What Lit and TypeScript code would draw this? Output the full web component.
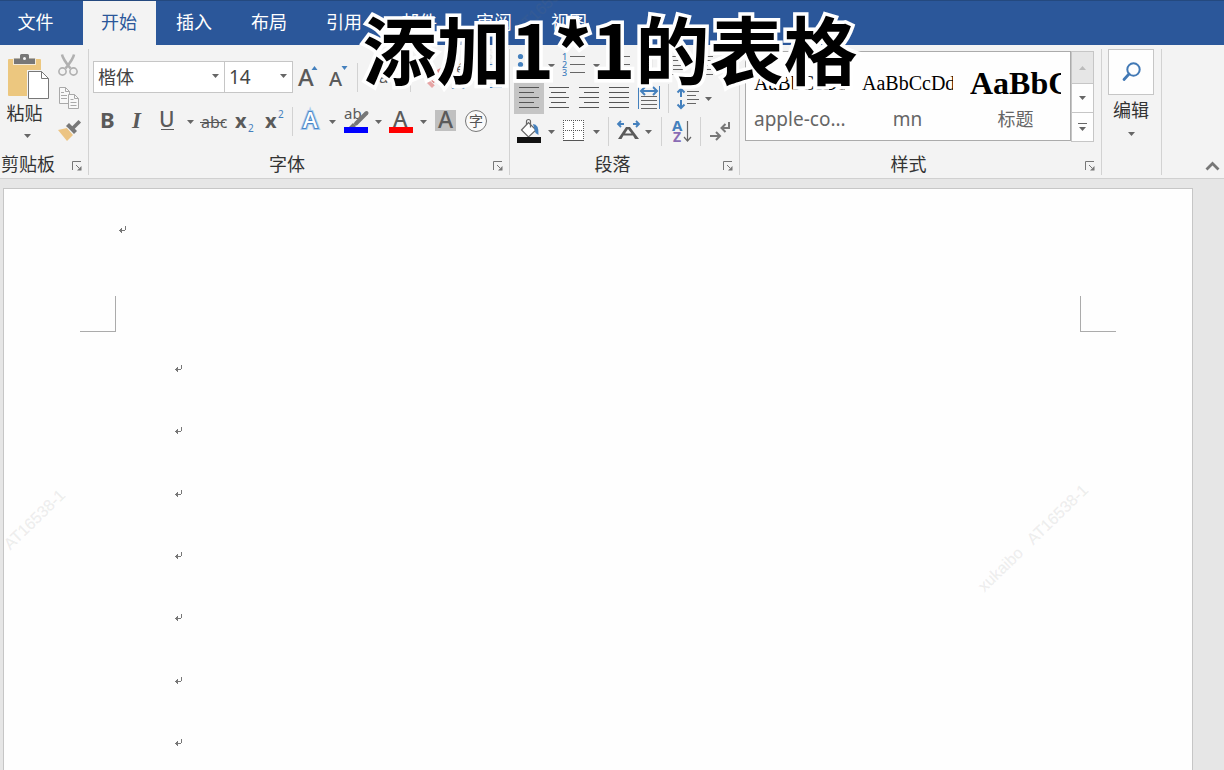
import { LitElement, html, svg, css } from "lit";
import type { SVGTemplateResult, TemplateResult } from "lit";
import { customElement, state } from "lit/decorators.js";
import { classMap } from "lit/directives/class-map.js";

type Art = SVGTemplateResult | SVGTemplateResult[];

/* All ribbon glyphs share one drawing sheet; every tool shows its own window of it. */
const sheet = (x: number, y: number, w: number, h: number, art: Art) => html`
  <svg width=${w} height=${h} viewBox="${x} ${y} ${w} ${h}" aria-hidden="true">${art}</svg>
`;

const tri = (cx: number, y: number, fill = "#666") =>
  svg`<path d="M${cx - 3.5} ${y}h7l-3.5 4z" fill=${fill}/>`;

const lines = (rows: number[][], color = "#666") =>
  rows.map(([x1, x2, y]) => svg`<rect x=${x1} y=${y} width=${x2 - x1} height="1" fill=${color}/>`);

const BLUE = "#4480bd";
const DARK = "#5a5a5a";

const pasteArt = svg`
  <rect x="8" y="59" width="33" height="37" rx="1" fill="#ecc77f"/>
  <path d="M13 58h23v7H13z" fill="#f3ead8"/>
  <path d="M14 58.500h6v-3q0-1.500 1.500-1.500h6q1.500 0 1.500 1.500v3h6V64H14z" fill="#777"/>
  <circle cx="24.500" cy="58.500" r="1.500" fill="#f3f3f3"/>
  <path d="M27 70h15l8 8v22H27z" fill="#f3f3f3"/>
  <path d="M28.500 71.500h13l7 7v20h-20z" fill="#fff" stroke="#777"/>
  <path d="M41.500 71.500v7h7" fill="none" stroke="#777"/>`;

const cutArt = svg`
  <path d="M62 54.500q.5 4 8.500 14M74 54.500q-.5 4-8.500 14" fill="none" stroke="#b0b0b0" stroke-width="2.500"/>
  <circle cx="62.500" cy="71.500" r="3.600" fill="none" stroke="#b0b0b0" stroke-width="1.600"/>
  <circle cx="73.500" cy="71.500" r="3.600" fill="none" stroke="#b0b0b0" stroke-width="1.600"/>`;

const copyArt = svg`
  <path d="M59.500 87.500h6l4 4v12h-10z" fill="#f8f8f8" stroke="#a9a9a9"/>
  <path d="M65.500 87.500v4h4M61 92.500h3M61 95.500h6M61 98.500h6" fill="none" stroke="#a9a9a9"/>
  <path d="M68.500 94.500h6l4 4v10h-10z" fill="#f8f8f8" stroke="#a9a9a9"/>
  <path d="M74.500 94.500v4h4M70.500 99.500h3M70.500 102.500h6M70.500 105.500h6" fill="none" stroke="#a9a9a9"/>`;

const brushArt = svg`
  <path d="M58 130l9-2 6 7-6 6z" fill="#ecc483"/>
  <path d="M66 126l3-3 8 8-3 3z" fill="#777"/>
  <path d="M73 128l5.500-5.500" stroke="#777" stroke-width="3.600" stroke-linecap="square"/>
  <path d="M67 127.500l6.500 7" stroke="#f3f3f3" stroke-width="1"/>`;

const searchArt = svg`
  <circle cx="1133.500" cy="69.500" r="6.200" fill="none" stroke="#4279b5" stroke-width="2"/>
  <path d="M1129 74l-5 5.500" stroke="#4279b5" stroke-width="2.800" stroke-linecap="round"/>`;

const wordText = (x: number, y: number, size: number, t: string, extra = "t") =>
  svg`<text class=${extra} x=${x} y=${y} font-size=${size}>${t}</text>`;

const growArt = svg`${wordText(298, 86, 24, "A", "t semi")}<path d="M311.500 70h6l-3-4z" fill=${BLUE}/>`;
const shrinkArt = svg`${wordText(329, 86, 20, "A", "t semi")}<path d="M341.500 66h6l-3 4z" fill=${BLUE}/>`;
const caseArt = svg`${wordText(367, 83, 18, "Aa")}${tri(400, 75)}`;
const eraserArt = svg`
  <path d="M427 81l10-11 7-4-3 9-8 9z" fill="#dd8a8a"/><path d="M426 82l3-3 6 6-3 3z" fill="#e7a5a5"/>
  <path d="M428.500 79l6.500 6" stroke="#f3f3f3" stroke-width="1"/>`;
const phoneticArt = svg`
  ${wordText(446, 73, 13, "wén")}
  <text class="cjk" x="451" y="87" font-size="14" fill=${BLUE}>文</text>`;
const frameArt = svg`
  <rect x="478.500" y="64.500" width="23" height="23" fill="none" stroke="#4480bd"/>
  ${wordText(483, 84, 19, "A")}`;

const boldArt = wordText(100, 128, 22, "B", "t bold");
const italicArt = svg`<text class="serif" x="132" y="128" font-size="23" fill=${DARK}>I</text>`;
const underArt = svg`${wordText(159, 127, 21, "U", "t semi")}<rect x="161" y="129" width="13" height="1" fill=${DARK}/>`;
const strikeArt = svg`${wordText(201, 128, 16, "abc")}<rect x="200" y="122" width="25" height="1" fill="#555"/>`;
const subArt = svg`${wordText(235, 128, 20, "x", "t bold")}<text class="sans" x="248" y="132" font-size="10" fill=${BLUE}>2</text>`;
const supArt = svg`${wordText(265, 128, 20, "x", "t bold")}<text class="sans" x="278" y="118" font-size="10" fill=${BLUE}>2</text>`;
const effectArt = svg`
  <text class="sans semi" x="303" y="128" font-size="22" fill="#fff" stroke="#a9cbee" stroke-width="4" paint-order="stroke">A</text>
  <text class="sans semi" x="303" y="128" font-size="22" fill="#fff" stroke="#4a86c6" stroke-width="2" paint-order="stroke">A</text>`;
const markerArt = svg`
  ${wordText(344, 119, 15, "ab")}
  <path d="M349 127l4-4 3 3-1 1z" fill="#777"/><path d="M356 123.500l10.500-10.500" stroke="#777" stroke-width="4" stroke-linecap="round"/>
  <rect x="344" y="127" width="24" height="6" fill="#00f"/>`;
const colorArt = svg`${wordText(393, 127, 22, "A", "t semi")}<rect x="389" y="127" width="24" height="6" fill="#f00"/>`;
const shadeArt = svg`<rect x="435" y="110" width="21" height="21" fill="#c0c0c0"/>${wordText(438, 128, 23, "A", "t semi")}`;
const circleArt = svg`
  <circle cx="476" cy="121" r="10.500" fill="#fafafa" stroke="#777"/>
  <text class="cjk" x="469" y="126" font-size="14" fill="#555">字</text>`;

const bulletsArt = svg`
  ${[56, 64, 72].map((y) => svg`<circle cx="520.500" cy=${y + 0.5} r="2.600" fill=${BLUE}/>`)}
  ${lines([[527, 541, 56], [527, 541, 64], [527, 541, 72]])}`;
const numbersArt = svg`
  ${["1", "2", "3"].map((n, i) => svg`<text class="sans semi" x="562" y=${60 + i * 8} font-size="9" fill=${BLUE}>${n}</text>`)}
  ${lines([[570, 585, 56], [570, 585, 64], [570, 585, 72]])}`;
const multiArt = svg`${lines([[608, 630, 56], [616, 630, 64], [624, 630, 72]])}`;
const outdentArt = svg`
  <path d="M664 64.500l4-4v3h3v3h-3v3z" fill=${BLUE}/>
  ${lines([[664, 683, 56], [673, 683, 60], [673, 683, 65], [673, 683, 69], [664, 683, 74]])}`;
const indentArt = svg`
  <path d="M701 64.500l-4-4v3h-3v3h3v3z" fill=${BLUE}/>
  ${lines([[694, 713, 56], [703, 711, 60], [703, 713, 65], [703, 711, 69], [694, 713, 74]])}`;

const alignYs = [87, 92, 97, 102, 107];
const alignArt = (x: number, kind: "left" | "center" | "right" | "full") =>
  svg`${lines(
    alignYs.map((y, i) => {
      const cut = kind === "full" || i % 2 === 0 ? 0 : 5;
      const a = kind === "right" ? cut : kind === "center" ? Math.floor(cut / 2) : 0;
      const b = kind === "left" ? cut : kind === "center" ? Math.ceil(cut / 2) : 0;
      return [x + a, x + 20 - b, y];
    }),
    "#555",
  )}`;
const spreadArt = svg`
  <rect x="638" y="86" width="1" height="23" fill=${BLUE}/><rect x="659" y="86" width="1" height="23" fill=${BLUE}/>
  <path d="M641 91h16M645 87l-4 4 4 4M653 87l4 4-4 4" fill="none" stroke=${BLUE} stroke-width="2"/>
  ${lines([[641, 657, 96], [641, 657, 100], [641, 657, 104], [641, 657, 108]])}`;
const spacingArt = svg`
  <path d="M681 89v19M677.500 92.500l3.500-3.500 3.500 3.500M677.500 104.500l3.500 3.500 3.500-3.500" fill="none" stroke=${BLUE} stroke-width="2"/>
  <rect x="679" y="97" width="4" height="3" fill="#f3f3f3"/>
  ${lines([[687, 699, 91], [687, 696, 95], [687, 699, 99], [687, 696, 103]])}`;

const bucketArt = svg`
  <path d="M521.500 130l7-7.500 7.500 7.500-7.500 7z" fill="#fff" stroke="#666" stroke-width="1.200"/>
  <path d="M526.500 125v-3.500q0-2 2-2t2 2v6" fill="none" stroke="#666" stroke-width="1.200"/>
  <path d="M533 124q6 0 5.500 11l-3-2z" fill=${BLUE}/>
  <rect x="517" y="137" width="24" height="6" fill="#111"/>`;
const bordersArt = svg`
  <rect x="563" y="120" width="21" height="20" fill="#fff"/>
  <path d="M563 120.500h21M563 130.500h21M563.500 120v20M573.500 120v20M583.500 120v20" fill="none" stroke="#555" stroke-dasharray="1 1"/>
  <rect x="563" y="140" width="21" height="1" fill="#555"/>`;
const scaleArt = svg`
  <path d="M618 139l8-12h4l9 12h-4l-2-3.500h-9.500l-2 3.500zM625 133.500h6.500l-3.500-4.500z" fill=${DARK}/>
  <path d="M618 124h6M621 121l-3 3 3 3M633 124h6M636 121l3 3-3 3" fill="none" stroke=${BLUE} stroke-width="1.800"/>`;
const sortArt = svg`
  <text class="sans bold" x="672" y="131" font-size="15" fill=${BLUE}>A</text>
  <text class="sans bold" x="673" y="142" font-size="14" fill="#8a6cb5">Z</text>
  <path d="M687.500 121v20M684 137l3.500 4 3.500-4" fill="none" stroke="#666" stroke-width="1.200"/>`;
const marksArt = svg`
  <path d="M729 122v6h-8M725.500 124l-4 4 4 4" fill="none" stroke="#777" stroke-width="2"/>
  <path d="M710 136h9M716 132l4 4-4 4" fill="none" stroke="#777" stroke-width="2"/>`;

@customElement("app-root")
export class AppRoot extends LitElement {
  @state() private tab = "开始";
  @state() private align = "left";

  static styles = css`
    :host {
      display: flex;
      flex-direction: column;
      position: relative;
      min-height: 100vh;
      overflow: hidden;
      background: #e6e6e6;
      color: #333;
      font: 18px/24px "Noto Sans", "Noto Sans CJK SC", sans-serif;
    }
    * { box-sizing: border-box; }
    button, select {
      margin: 0;
      padding: 0;
      border: 0;
      border-radius: 0;
      background: none;
      color: inherit;
      font: inherit;
      appearance: none;
    }
    svg { display: block; overflow: visible; }
    .t, .sans { font-family: "Noto Sans", sans-serif; }
    .t { fill: #5a5a5a; }
    .semi { font-weight: 500; }
    .bold { font-weight: 700; }
    .serif { font-family: "Liberation Serif", serif; font-weight: 700; font-style: italic; }
    .cjk { font-family: "Noto Sans CJK SC", sans-serif; }

    .tabs {
      display: flex;
      height: 45px;
      border-top: 1px solid #24497f;
      background: #2b579a;
      color: #fff;
    }
    .tab { width: 73px; margin: 0 1px; padding: 0 1px 2px 0; }
    .file { margin: 0 10px 0 0; width: 72px; }
    .active { background: #f3f3f3; color: #2b579a; }

    .ribbon {
      display: flex;
      padding: 4px 0 3px;
      border-bottom: 1px solid #d0d0d0;
      background: #f3f3f3;
    }
    .group { display: flex; flex-direction: column; border-right: 1px solid #d2d2d2; }
    .body { height: 104px; }
    .foot { display: flex; height: 22px; align-items: center; }
    .name { flex: 1; text-align: center; }
    .launch { width: 24px; padding: 4px 0 0 8px; }

    .clip { display: flex; padding-top: 3px; }
    .paste { display: flex; flex-direction: column; width: 55px; }
    .pastename { padding-right: 6px; }
    .mini { display: flex; flex-direction: column; width: 33px; }
    .clipname { padding-left: 1px; text-align: left; }

    .font { display: flex; flex-direction: column; gap: 12px; padding: 12px 0 0 4px; width: 420px; }
    .para { display: flex; flex-direction: column; gap: 2px; padding: 1px 0 0 4px; width: 229px; }
    .row { display: flex; align-items: center; }
    .combo { display: flex; position: relative; }
    .combo svg { position: absolute; right: 6px; top: 13px; pointer-events: none; }
    .combo select {
      width: 132px;
      height: 32px;
      padding: 0 4px;
      border: 1px solid #c6c6c6;
      background: #fff;
      color: #444;
    }
    .size select { width: 69px; font-size: 19px; }
    .size { margin-left: -1px; }
    .rule { width: 1px; height: 29px; margin: 0 3px 0 4px; background: #d2d2d2; }
    .on { background: #c5c5c5; }

    .styles { display: flex; align-items: flex-start; padding: 2px 7px 0 5px; }
    .gallery { display: flex; height: 90px; border: 1px solid #ababab; background: #fefefe; }
    .style { width: 108px; padding: 12px 9px 6px 8px; color: #666; }
    .sample {
      display: block;
      height: 40px;
      overflow: hidden;
      white-space: nowrap;
      text-align: left;
      color: #000;
      font: 20px/38px "Liberation Serif", serif;
    }
    .heading { font-size: 32px; font-weight: 700; }
    .caption { display: block; height: 30px; font-size: 19px; line-height: 30px; white-space: nowrap; }
    .cn { font-size: 18px; }
    .scroller { display: flex; flex-direction: column; width: 23px; }
    .scroller button {
      display: flex;
      justify-content: center;
      align-items: center;
      height: 30px;
      margin-bottom: -1px;
      border: 1px solid #c6c6c6;
      background: #fefefe;
    }
    .scroller .off { height: 33px; background: #e6e6e6; }

    .edit { display: flex; flex-direction: column; align-items: center; width: 59px; padding: 0 7px 0 6px; }
    .find { display: block; border: 1px solid #c6c6c6; background: #fefefe; margin-bottom: 3px; }
    .edit .drop { margin-top: 10px; }
    .spare { display: flex; flex: 1; justify-content: flex-end; align-items: flex-end; padding: 0 4px 4px 0; }

    .page {
      flex: 1;
      margin: 9px 31px 0 3px;
      padding-top: 37px;
      border: 1px solid #c6c6c6;
      border-bottom: 0;
      background: #fefefe;
    }
    .header { height: 70px; padding-left: 115px; }
    .corners { display: flex; justify-content: space-between; padding: 0 76px; }
    .corner { width: 36px; height: 36px; border: 0 solid #ababab; border-bottom-width: 1px; }
    .nw { border-right-width: 1px; }
    .ne { border-left-width: 1px; }
    .lines { display: grid; height: 437px; margin: 5px 0 0; padding-left: 171px; }
    .line { display: flex; align-items: center; margin: 0; }

    .title {
      position: absolute;
      top: 0;
      left: 0;
      right: 0;
      margin: 0;
      padding-right: 4px;
      text-align: center;
      color: #000;
      font: 700 74px/94px "Noto Sans CJK SC", sans-serif;
      -webkit-text-stroke: 7px #fff;
      paint-order: stroke fill;
      stroke-linejoin: round;
      pointer-events: none;
    }
    .stamp {
      position: absolute;
      transform: rotate(-44deg);
      transform-origin: 0 100%;
      white-space: pre;
      color: rgba(120, 120, 120, 0.1);
      font: 16px/20px "Liberation Sans", sans-serif;
      -webkit-text-stroke: 1px rgba(120, 120, 120, 0.05);
      pointer-events: none;
    }
    .s1 { left: -35px; top: 581px; }
    .s2 { left: 988px; top: 576px; }
    .s3 { left: 476px; top: 66px; }
  `;

  private tool(label: string, x: number, y: number, w: number, h: number, art: Art): TemplateResult {
    return html`<button aria-label=${label} title=${label}>${sheet(x, y, w, h, art)}</button>`;
  }

  private aligner(id: string, label: string, x: number, art: Art): TemplateResult {
    return html`<button class=${classMap({ on: this.align === id })} aria-label=${label}
      aria-pressed=${this.align === id} @click=${() => (this.align = id)}>${sheet(x, 83, 30, 31, art)}</button>`;
  }

  private foot(name: string, cls = ""): TemplateResult {
    return html`<div class="foot"><span class="name ${cls}">${name}</span>
      <button class="launch" aria-label="${name}设置">
        <svg width="10" height="10" viewBox="0 0 10 10" aria-hidden="true">
          <path d="M.5 9V.5H9M4 4l3 3" fill="none" stroke="#777"/><path d="M9.500 5v4.500H5z" fill="#777"/>
        </svg></button></div>`;
  }

  private mark(): TemplateResult {
    return html`<svg width="7" height="7" viewBox="0 0 7 7" aria-hidden="true">
      <path d="M6 0h1v4H6zM0 4h6v1H0zM1 3h1v3H1zM2 2h1v5H2z" fill="#777"/></svg>`;
  }

  render() {
    const rule = html`<span class="rule"></span>`;
    const font = (l: string, x: number, w: number, art: Art) => this.tool(l, x, 61, w, 32, art);
    const fmt = (l: string, x: number, w: number, art: Art) => this.tool(l, x, 105, w, 32, art);
    const list = (l: string, x: number, w: number, art: Art) => this.tool(l, x, 50, w, 31, art);
    const deco = (l: string, x: number, w: number, art: Art) => this.tool(l, x, 116, w, 31, art);
    const chevron = html`<svg width="7" height="4" viewBox="0 0 7 4" aria-hidden="true"><path d="M0 0h7L3.500 4z" fill="#666"/></svg>`;
    return html`
      <nav class="tabs">
        ${["文件", "开始", "插入", "布局", "引用", "邮件", "审阅", "视图"].map(
          (t, i) => html`<button class=${classMap({ tab: true, file: i === 0, active: t === this.tab })}
            @click=${() => (this.tab = t)}>${t}</button>`,
        )}
      </nav>

      <section class="ribbon">
        <div class="group">
          <div class="body clip">
            <button class="paste">
              ${sheet(0, 52, 55, 49, pasteArt)}
              <span class="pastename">粘贴</span>
              ${sheet(0, 125, 55, 16, tri(27.5, 134))}
            </button>
            <div class="mini">
              ${this.tool("剪切", 55, 52, 33, 31, cutArt)}
              ${this.tool("复制", 55, 83, 33, 31, copyArt)}
              ${this.tool("格式刷", 55, 114, 33, 32, brushArt)}
            </div>
          </div>
          ${this.foot("剪贴板", "clipname")}
        </div>

        <div class="group">
          <div class="body font">
            <div class="row">
              <label class="combo"><select aria-label="字体"><option>楷体</option><option>宋体</option></select>${chevron}</label>
              <label class="combo size"><select aria-label="字号"><option>14</option><option>16</option></select>${chevron}</label>
              ${font("增大字号", 293, 30, growArt)}
              ${font("减小字号", 323, 30, shrinkArt)}
              ${rule}
              ${font("更改大小写", 361, 45, caseArt)}
              ${rule}
              ${font("清除格式", 414, 33, eraserArt)}
              ${font("拼音指南", 447, 26, phoneticArt)}
              ${font("字符边框", 473, 33, frameArt)}
            </div>
            <div class="row">
              ${fmt("加粗", 93, 29, boldArt)}
              ${fmt("倾斜", 122, 30, italicArt)}
              ${fmt("下划线", 152, 30, underArt)}
              ${fmt("下划线样式", 182, 16, tri(190.5, 120))}
              ${fmt("删除线", 198, 31, strikeArt)}
              ${fmt("下标", 229, 30, subArt)}
              ${fmt("上标", 259, 29, supArt)}
              ${rule}
              ${fmt("文本效果", 296, 30, effectArt)}
              ${fmt("文本效果选项", 326, 15, tri(332.5, 120))}
              ${fmt("突出显示", 341, 30, markerArt)}
              ${fmt("突出显示颜色", 371, 15, tri(378.5, 120))}
              ${fmt("字体颜色", 386, 30, colorArt)}
              ${fmt("字体颜色选项", 416, 15, tri(423.5, 120))}
              ${fmt("字符底纹", 431, 30, shadeArt)}
              ${fmt("带圈字符", 461, 30, circleArt)}
            </div>
          </div>
          ${this.foot("字体")}
        </div>

        <div class="group">
          <div class="body para">
            <div class="row">
              ${list("项目符号", 514, 30, bulletsArt)}
              ${list("项目符号库", 544, 15, tri(551.5, 64))}
              ${list("编号", 559, 30, numbersArt)}
              ${list("编号库", 589, 15, tri(596.5, 64))}
              ${list("多级列表", 604, 30, multiArt)}
              ${list("多级列表库", 634, 14, tri(641.5, 64))}
              ${rule}
              ${list("减少缩进", 656, 30, outdentArt)}
              ${list("增加缩进", 686, 30, indentArt)}
            </div>
            <div class="row">
              ${this.aligner("left", "左对齐", 514, alignArt(519, "left"))}
              ${this.aligner("center", "居中", 544, alignArt(549, "center"))}
              ${this.aligner("right", "右对齐", 574, alignArt(579, "right"))}
              ${this.aligner("full", "两端对齐", 604, alignArt(609, "full"))}
              ${this.aligner("spread", "分散对齐", 634, spreadArt)}
              ${rule}
              ${this.tool("行距", 672, 83, 30, 31, spacingArt)}
              ${this.tool("行距选项", 702, 83, 15, 31, tri(708.5, 97))}
            </div>
            <div class="row">
              ${deco("底纹", 514, 30, bucketArt)}
              ${deco("底纹颜色", 544, 15, tri(551.5, 130))}
              ${deco("边框", 559, 30, bordersArt)}
              ${deco("边框选项", 589, 15, tri(596.5, 130))}
              ${rule}
              ${deco("中文版式", 612, 30, scaleArt)}
              ${deco("中文版式选项", 642, 15, tri(648.5, 130))}
              ${rule}
              ${deco("排序", 665, 31, sortArt)}
              ${rule}
              ${deco("显示编辑标记", 704, 30, marksArt)}
            </div>
          </div>
          ${this.foot("段落")}
        </div>

        <div class="group">
          <div class="body styles">
            <div class="gallery">
              <button class="style"><span class="sample">AaBbCcDd</span><span class="caption">apple-co...</span></button>
              <button class="style"><span class="sample">AaBbCcDd</span><span class="caption">mn</span></button>
              <button class="style"><span class="sample heading">AaBbCcDd</span><span class="caption cn">标题</span></button>
            </div>
            <div class="scroller">
              <button class="off" aria-label="上一行" disabled>${sheet(0, 0, 7, 4, svg`<path d="M0 4h7L3.500 0z" fill="#bbb"/>`)}</button>
              <button aria-label="下一行">${chevron}</button>
              <button aria-label="其他样式">${sheet(0, 0, 9, 8, svg`<path d="M0 0h9v1H0zM1 4h7L4.500 8z" fill="#666"/>`)}</button>
            </div>
          </div>
          ${this.foot("样式")}
        </div>

        <div class="group">
          <button class="edit">
            <span class="find">${sheet(1109, 50, 44, 44, searchArt)}</span>
            <span>编辑</span>
            <span class="drop">${chevron}</span>
          </button>
        </div>

        <div class="spare">
          <button aria-label="折叠功能区">
            <svg width="15" height="10" viewBox="0 0 15 10" aria-hidden="true">
              <path d="M1.500 8.500l6-6 6 6" fill="none" stroke="#777" stroke-width="2.800"/>
            </svg>
          </button>
        </div>
      </section>

      <main class="page">
        <div class="header">${this.mark()}</div>
        <div class="corners"><span class="corner nw"></span><span class="corner ne"></span></div>
        <div class="lines">${Array.from({ length: 7 }, () => html`<p class="line">${this.mark()}</p>`)}</div>
      </main>

      <span class="stamp s1">xukaibo   AT16538-1</span>
      <span class="stamp s2">xukaibo   AT16538-1</span>
      <span class="stamp s3">xukaibo   AT16538-1</span>
      <h1 class="title">添加1*1的表格</h1>
    `;
  }
}
